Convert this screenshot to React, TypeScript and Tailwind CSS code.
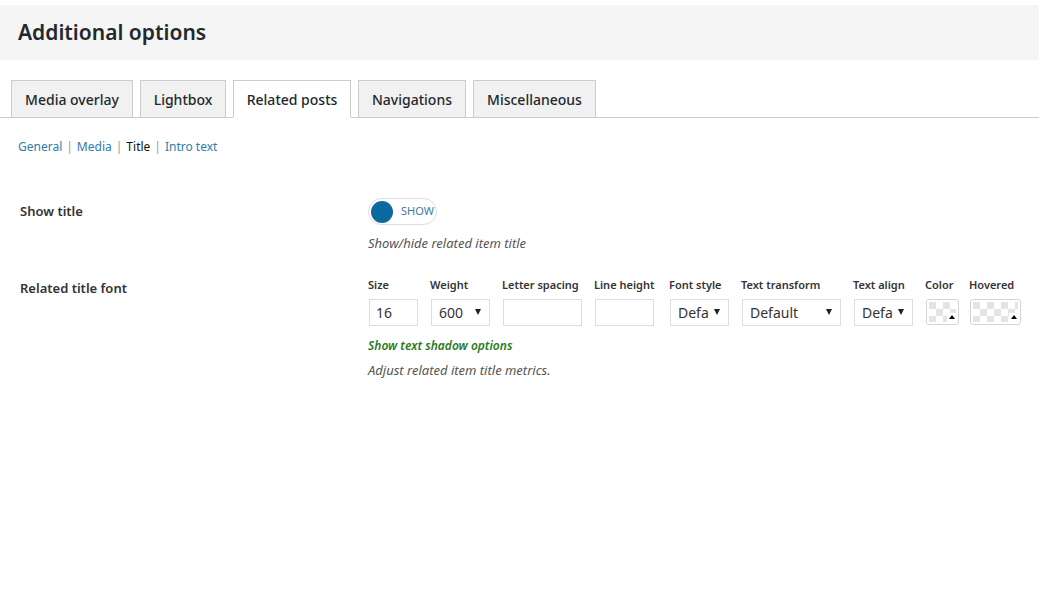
const font = { fontFamily: '"Segoe UI", "Noto Sans", "Open Sans", sans-serif' }

const tabs = [
  { label: 'Media overlay', w: 'w-[122px]' },
  { label: 'Lightbox', w: 'w-[86px]' },
  { label: 'Related posts', w: 'w-[118px]' },
  { label: 'Navigations', w: 'w-[108px]' },
  { label: 'Miscellaneous', w: 'w-[123px]' },
]

function Checker({ id }: { id: string }) {
  return (
    <svg className="absolute inset-0 h-full w-full" aria-hidden>
      <defs>
        <pattern id={id} width="14" height="14" patternUnits="userSpaceOnUse">
          <rect width="14" height="14" fill="#ffffff" />
          <rect width="7" height="7" fill="#e4e4e4" />
          <rect x="7" y="7" width="7" height="7" fill="#e4e4e4" />
        </pattern>
      </defs>
      <rect width="100%" height="100%" fill={`url(#${id})`} />
    </svg>
  )
}

function Swatch({ id, width }: { id: string; width: string }) {
  return (
    <div className={`relative h-[26px] ${width} overflow-hidden rounded-[3px] border border-[#d4d4d4] bg-white`}>
      <div className="absolute inset-[2px] overflow-hidden">
        <Checker id={id} />
      </div>
      <div className="absolute bottom-[2px] right-[2px] flex h-[9px] w-[9px] items-center justify-center bg-white">
        <span className="block h-0 w-0 border-x-[3px] border-b-[4px] border-x-transparent border-b-black" />
      </div>
    </div>
  )
}

// label sits above the control and may run wider than it
function Field({ label, w, children }: { label: string; w: string; children: React.ReactNode }) {
  return (
    <div className={`flex ${w} shrink-0 flex-col`}>
      <span className="mb-[6px] h-[16px] whitespace-nowrap text-[11px] leading-[16px] font-semibold text-[#333]">
        {label}
      </span>
      {children}
    </div>
  )
}

function TextBox({ value }: { value?: string }) {
  return (
    <div className="ml-px flex h-[27px] items-center border border-[#ddd] bg-white pl-[6px] text-[14px] text-[#333]">
      {value}
    </div>
  )
}

function Select({ value }: { value: string }) {
  return (
    <div className="ml-px flex h-[27px] items-center justify-between border border-[#ddd] bg-white pl-[7px] pr-[8px] text-[14px] text-[#333]">
      <span className="whitespace-nowrap">{value}</span>
      <span className="ml-1 block h-0 w-0 shrink-0 border-x-[3.5px] border-t-[6px] border-x-transparent border-t-[#222]" />
    </div>
  )
}

export default function App() {
  return (
    <div className="min-h-[589px] w-[1039px] bg-white pt-[5px]" style={font}>
      <div className="flex h-[55px] items-center bg-[#f5f5f5] pl-[18px]">
        <h1 className="text-[21px] font-semibold text-[#23282d]">Additional options</h1>
      </div>

      <div className="mt-[20px] flex gap-[7px] border-b border-[#ccc] pl-[11px]">
        {tabs.map((t) => {
          const active = t.label === 'Related posts'
          return (
            <div
              key={t.label}
              className={
                active
                  ? `-mb-px flex h-[38px] ${t.w} items-center justify-center border border-b-white border-[#ccc] bg-white text-[14px] font-medium text-[#23282d]`
                  : `flex h-[37px] ${t.w} items-center justify-center border border-b-0 border-[#ccc] bg-[#f1f1f1] text-[14px] font-medium text-[#23282d]`
              }
            >
              {t.label}
            </div>
          )
        })}
      </div>

      <div className="mt-[20px] pl-[18px] text-[12px] text-[#2e7dab]">
        <span>General</span>
        <span className="mx-[4px] text-[#999]">|</span>
        <span>Media</span>
        <span className="mx-[4px] text-[#999]">|</span>
        <span className="text-[#111]">Title</span>
        <span className="mx-[4px] text-[#999]">|</span>
        <span>Intro text</span>
      </div>

      <div className="mt-[42px] grid grid-cols-[348px_1fr] pl-[20px]">
        <div className="pt-[4px] text-[13px] font-semibold text-[#333]">Show title</div>
        <div>
          <div className="flex h-[27px] w-[69px] items-center rounded-full border border-[#ddd] bg-white pl-[2px]">
            <span className="h-[22px] w-[22px] rounded-full bg-[#0a6aa0]" />
            <span className="ml-[8px] text-[11px] text-[#3a7ca5]">SHOW</span>
          </div>
          <p className="mt-[9px] text-[13px] italic text-[#555]">Show/hide related item title</p>
        </div>

        <div className="mt-[23px] pt-[2px] text-[13px] font-semibold text-[#333]">Related title font</div>
        <div className="mt-[23px]">
          <div className="flex items-start">
            <Field label="Size" w="w-[62px]">
              <div className="w-[50px]">
                <TextBox value="16" />
              </div>
            </Field>
            <Field label="Weight" w="w-[72px]">
              <div className="w-[60px]">
                <Select value="600" />
              </div>
            </Field>
            <Field label="Letter spacing" w="w-[92px]">
              <div className="w-[80px]">
                <TextBox />
              </div>
            </Field>
            <Field label="Line height" w="w-[75px]">
              <div className="w-[60px]">
                <TextBox />
              </div>
            </Field>
            <Field label="Font style" w="w-[72px]">
              <div className="w-[60px]">
                <Select value="Defa" />
              </div>
            </Field>
            <Field label="Text transform" w="w-[112px]">
              <div className="w-[100px]">
                <Select value="Default" />
              </div>
            </Field>
            <Field label="Text align" w="w-[72px]">
              <div className="w-[60px]">
                <Select value="Defa" />
              </div>
            </Field>
            <Field label="Color" w="w-[44px]">
              <div className="ml-px">
                <Swatch id="c1" width="w-[33px]" />
              </div>
            </Field>
            <Field label="Hovered" w="w-[52px]">
              <div className="ml-px">
                <Swatch id="c2" width="w-[51px]" />
              </div>
            </Field>
          </div>
          <p className="mt-[11px] text-[12px] font-semibold italic text-[#2a7a1e]">Show text shadow options</p>
          <p className="mt-[6px] text-[13px] italic text-[#555]">Adjust related item title metrics.</p>
        </div>
      </div>
    </div>
  )
}
